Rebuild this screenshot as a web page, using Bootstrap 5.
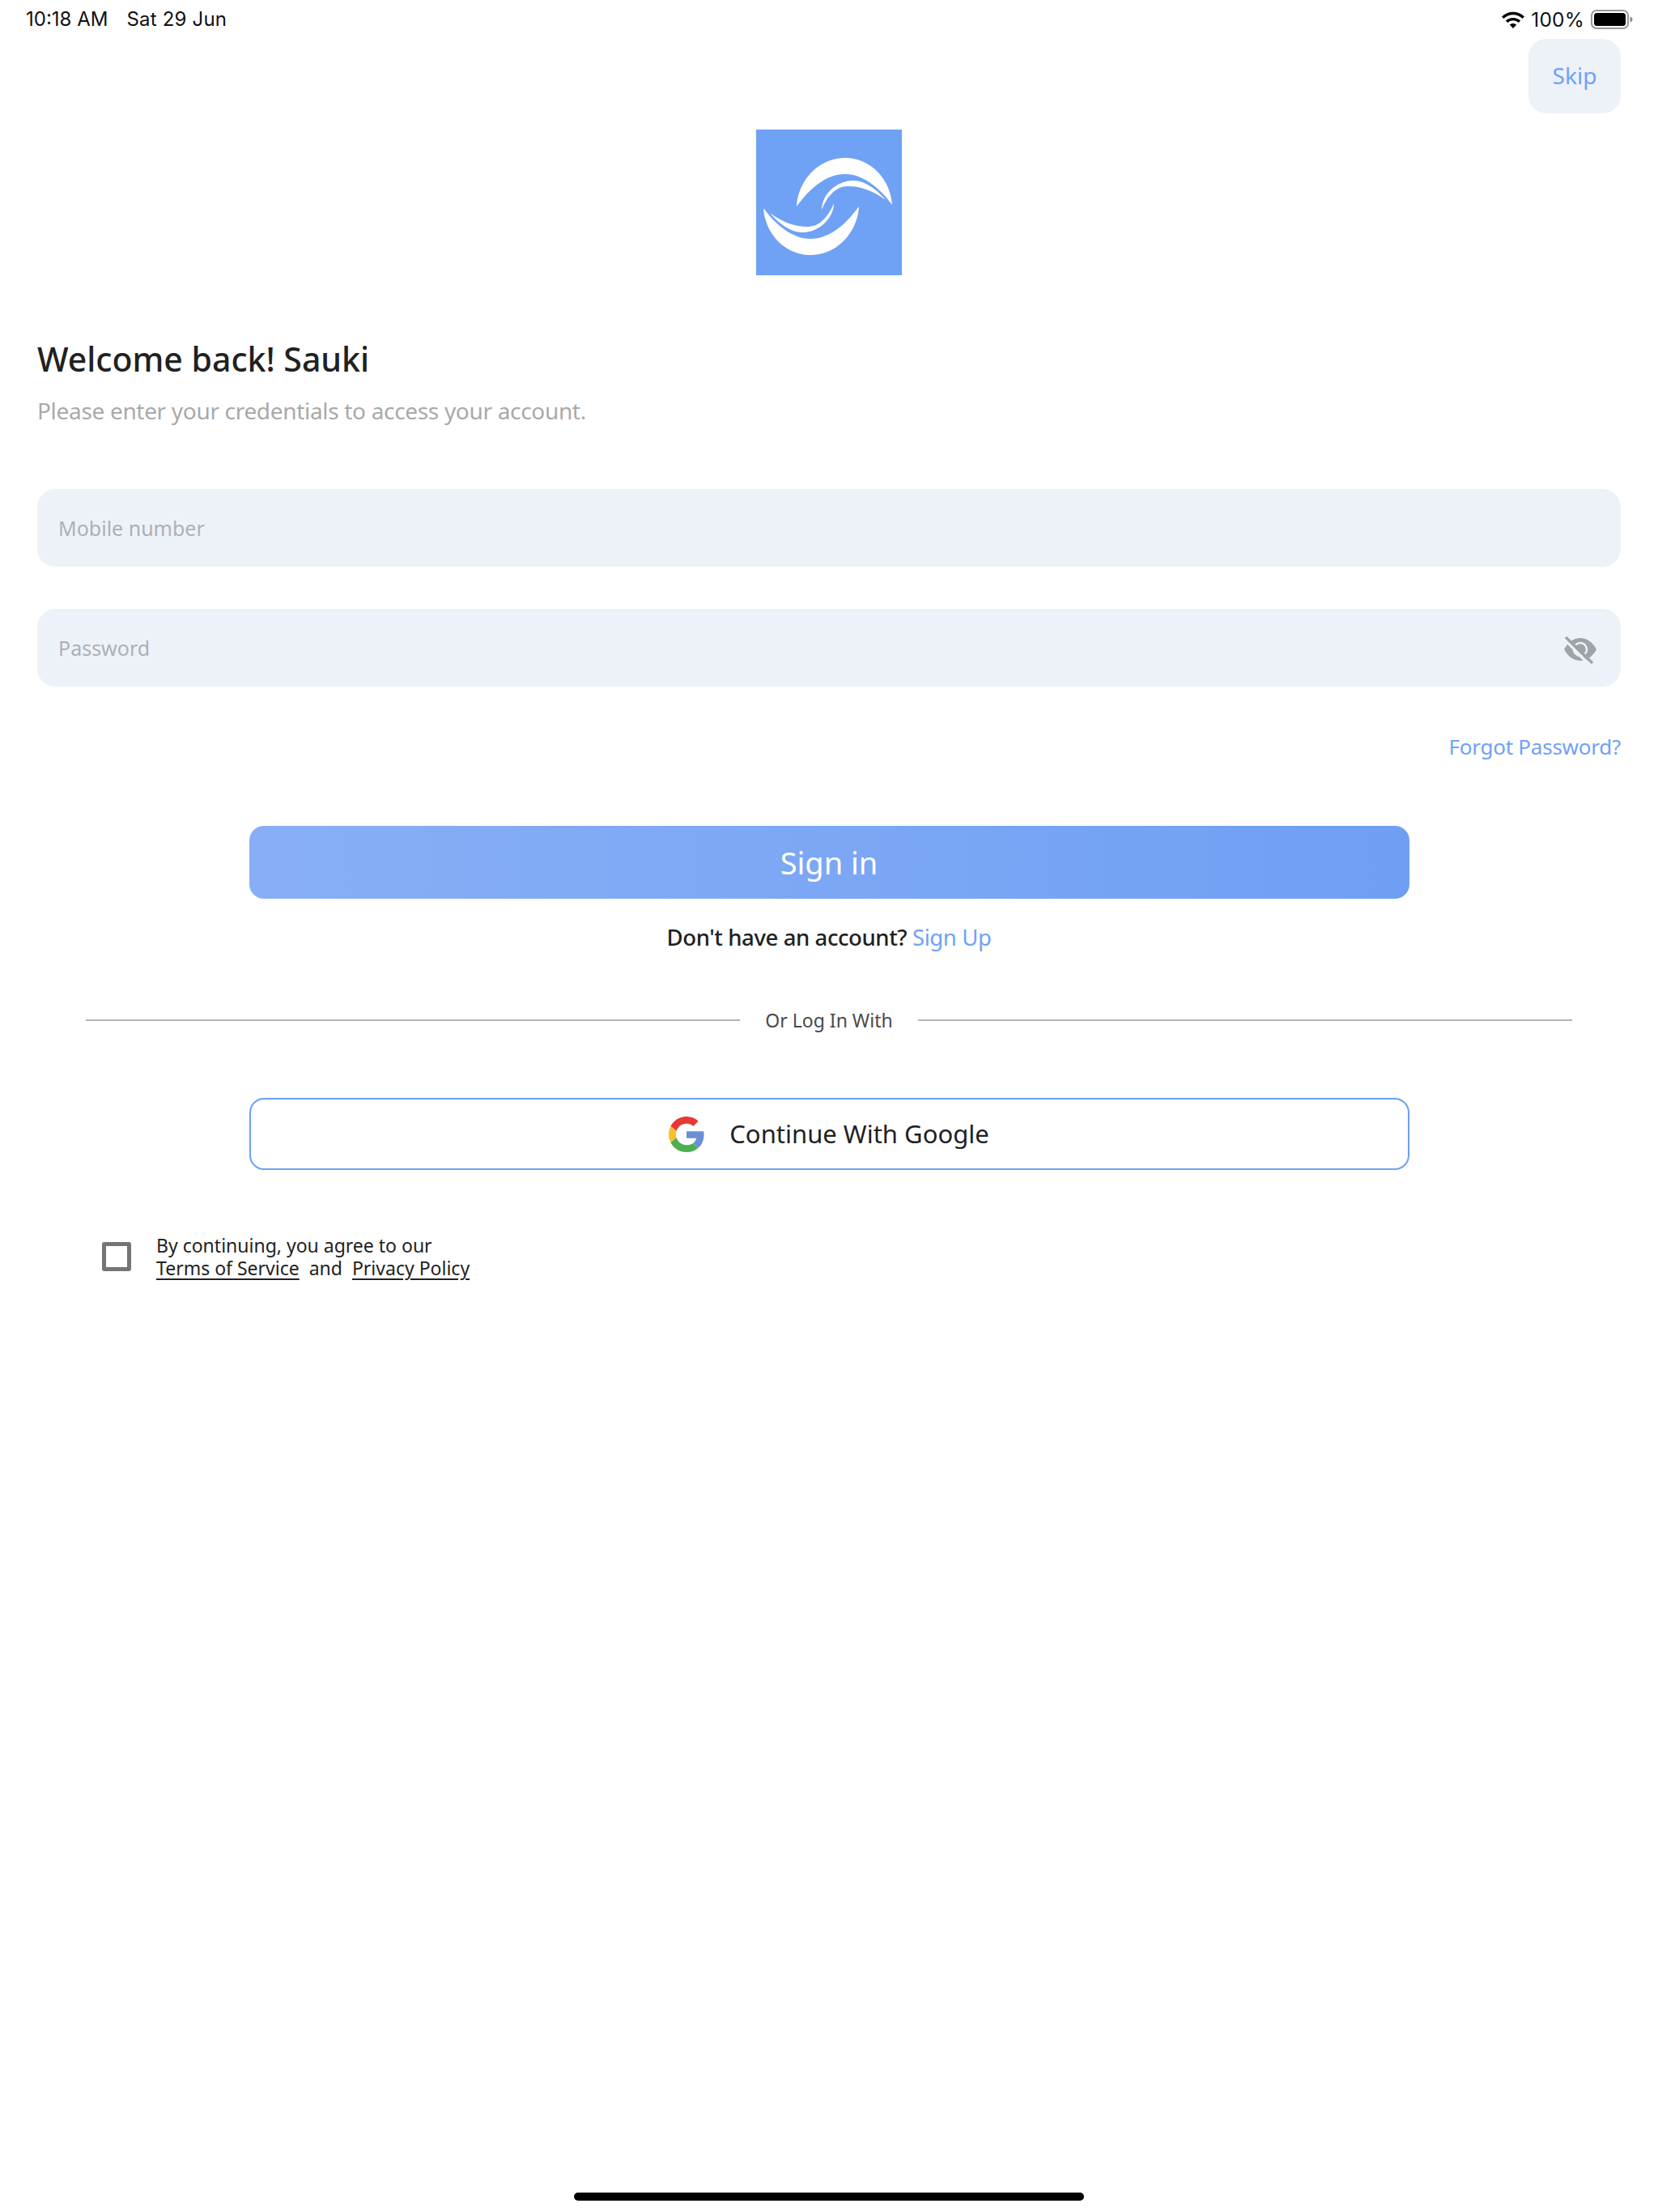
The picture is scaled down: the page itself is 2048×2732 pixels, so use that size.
<!DOCTYPE html>
<html lang="en">
<head>
<meta charset="utf-8">
<title>Sign in</title>
<link href="https://cdn.jsdelivr.net/npm/bootstrap@5.3.0/dist/css/bootstrap.min.css" rel="stylesheet">
<style>
html,body{background:#fff;}
body{font-family:"Noto Sans","Open Sans",sans-serif;color:#212121;}
.screen{min-height:2732px;width:2048px;}
.statusbar{height:48px;padding:0 31px 0 32px;font-family:"Inter","Liberation Sans",sans-serif;font-size:24px;color:#111;line-height:48px;}
.statusbar .st-date{margin-left:23px;letter-spacing:.2px;}
.st-pct{font-size:24.500px;letter-spacing:.2px;}
.content{padding:0 46px;}
.skip-wrap{height:92px;}
.skip-btn{width:114px;height:92px;background:#edf2f9;border:0;border-radius:22px;color:#6ea2f7;font-size:28px;padding:0 0 2px;}
.logo-wrap{margin-top:20px;}
.logo-img{width:180px;height:180px;display:block;}
.welcome{font-size:41px;font-weight:500;margin:73px 0 0;line-height:60px;color:#212121;}
.sub{font-size:28px;color:#a9a9a9;margin:13px 0 0;line-height:42px;letter-spacing:-.32px;}
.field-wrap{margin-top:76px;}
.field-wrap + .field-wrap{margin-top:52px;}
.field{height:96px;background:#edf2f9;border:0;border-radius:22px;padding:0 26px;font-size:25px;color:#212121;}
.field::placeholder{color:#adb0b5;opacity:1;}
.field:focus{background:#edf2f9;box-shadow:none;}
.eye-btn{right:29px;top:33px;width:42px;height:36px;}
.forgot{color:#6ea2f7;font-size:26px;letter-spacing:-.25px;text-decoration:none;line-height:40px;margin-top:54px;}
.sign-in{width:1433px;height:90px;border:0;border-radius:18px;background:linear-gradient(90deg,#88aff6,#6f9ff3);color:#fff;font-size:38px;margin-top:78px;padding:0;}
.signup-line{font-size:27.500px;font-weight:500;color:#212121;line-height:40px;margin-top:28px;letter-spacing:-.4px;}
.signup-line a{color:#6ea2f7;text-decoration:none;font-weight:400;}
.divider-row{margin:62px 60px 0 60px;height:40px;}
.divider-line{height:2px;background:#b4b4b4;}
.divider-text{font-size:23px;color:#4a4a4a;padding:0 31px;line-height:40px;}
.google-btn{width:1433px;height:89px;background:#fff;border:2px solid #6ea0f4;border-radius:18px;color:#212121;font-size:31px;margin-top:76px;padding:0;}
.google-btn svg{width:44px;height:44px;margin-right:31px;}
.agree{margin:79px 0 0 80px;font-size:23px;line-height:28px;color:#222;}
.check-box{width:36px;height:36px;border:5px solid #757575;border-radius:3px;margin-right:31px;}
.agree a{color:#222;text-underline-offset:4px;}
.agree .amp{margin:0 12px;}
.home-bar{width:630px;height:10px;background:#000;border-radius:5px;margin-bottom:14px;}
</style>
</head>
<body class="m-0">
<div class="screen d-flex flex-column">
  <div class="statusbar d-flex justify-content-between align-items-center">
    <div><span>10:18 AM</span><span class="st-date">Sat 29 Jun</span></div>
    <div class="d-flex align-items-center">
      <svg width="28" height="21" viewBox="0 0 28 21" class="me-2" fill="none" stroke="#000" stroke-width="3.400"><path d="M1.200 7.700C8.500.7 19.500.7 26.800 7.700"/><path d="M6 12.800C10.600 8.500 17.400 8.500 22 12.800"/><path d="M9.800 16.600L14 21l4.200-4.400C15.800 14.500 12.200 14.500 9.800 16.600Z" fill="#000" stroke="none"/></svg>
      <span class="st-pct">100%</span>
      <svg width="52" height="24" viewBox="0 0 52 24" class="ms-2"><rect x="1" y="1" width="45" height="22" rx="6" fill="none" stroke="#9a9a9a" stroke-width="2"/><rect x="4" y="4" width="39" height="16" rx="3.500" fill="#000"/><path d="M48.500 8.500c1.800.5 3 1.900 3 3.500s-1.200 3-3 3.500z" fill="#8a8a8a"/></svg>
    </div>
  </div>
  <div class="content">
    <div class="skip-wrap d-flex justify-content-end"><button type="button" class="btn skip-btn">Skip</button></div>
    <div class="logo-wrap d-flex justify-content-center">
      <svg class="logo-img" viewBox="0 0 180 180" role="img" aria-label="Logo">
        <rect width="180" height="180" fill="#6fa2f5"/>
        <g fill="#fff">
          <path id="big" d="M50 95C52 62 78 35 110 35C142 35 166 62 168 93C152 71 131 55 110 55C86 55 66 73 50 95Z"/>
          <path id="small" d="M81 99C81 80 100 63 120 63C135 63 150 75 160 87C145 76 130 70 113 70C98 70 87 84 81 99Z"/>
          <use href="#big" transform="rotate(180 88.500 95)"/>
          <use href="#small" transform="rotate(180 88.500 95)"/>
        </g>
      </svg>
    </div>
    <h1 class="welcome">Welcome back! Sauki</h1>
    <p class="sub">Please enter your credentials to access your account.</p>
    <div class="field-wrap"><input class="form-control field" type="text" placeholder="Mobile number"></div>
    <div class="field-wrap position-relative">
      <input class="form-control field" type="password" placeholder="Password">
      <div class="eye-btn position-absolute">
        <svg width="42" height="36" viewBox="0 0 42 36">
          <path d="M1 17C6 8 13 3 21 3s15 5 20 14c-5 9-12 14-20 14S6 26 1 17Z" fill="#9fa3a8"/>
          <circle cx="21" cy="17" r="8" fill="none" stroke="#edf2f9" stroke-width="2.500"/>
          <path d="M1 4l32 33" stroke="#edf2f9" stroke-width="3.500"/>
          <path d="M3 2l33 32" stroke="#9fa3a8" stroke-width="3.500"/>
        </svg>
      </div>
    </div>
    <div class="d-flex justify-content-end"><a href="#" class="forgot">Forgot Password?</a></div>
    <div class="d-flex justify-content-center"><button type="button" class="btn sign-in">Sign in</button></div>
    <div class="signup-line text-center">Don't have an account? <a href="#">Sign Up</a></div>
    <div class="divider-row d-flex align-items-center">
      <div class="divider-line flex-grow-1"></div>
      <div class="divider-text">Or Log In With</div>
      <div class="divider-line flex-grow-1"></div>
    </div>
    <div class="d-flex justify-content-center">
      <button type="button" class="btn google-btn d-flex align-items-center justify-content-center">
        <svg viewBox="0 0 48 48" aria-hidden="true">
          <path fill="#e53935" d="M24 9.500c3.500 0 6.700 1.300 9.100 3.500l6.800-6.800C35.800 2.400 30.300 0 24 0 14.600 0 6.500 5.400 2.600 13.200l7.900 6.100C12.400 13.600 17.700 9.500 24 9.500z"/>
          <path fill="#6b8fd4" d="M47.500 24.500c0-1.600-.1-3.100-.4-4.500H24v9.100h13.200c-.6 3-2.300 5.500-4.800 7.200l7.700 6c4.500-4.200 7.400-10.300 7.400-17.800z"/>
          <path fill="#fbc02d" d="M10.500 28.700c-.5-1.500-.8-3-.8-4.700s.3-3.200.8-4.700l-7.900-6.100C.9 16.500 0 20.100 0 24s.9 7.500 2.600 10.800l7.900-6.100z"/>
          <path fill="#4caf50" d="M24 48c6.500 0 11.900-2.100 15.900-5.800l-7.700-6c-2.200 1.500-4.900 2.300-8.200 2.300-6.300 0-11.600-4.100-13.500-9.800l-7.900 6.100C6.500 42.600 14.600 48 24 48z"/>
        </svg>
        <span>Continue With Google</span>
      </button>
    </div>
    <div class="agree d-flex align-items-center">
      <div class="check-box flex-shrink-0"></div>
      <div>By continuing, you agree to our<br><a href="#">Terms of Service</a><span class="amp">and</span><a href="#">Privacy Policy</a></div>
    </div>
  </div>
  <div class="mt-auto d-flex justify-content-center"><div class="home-bar"></div></div>
</div>
<script src="https://cdn.jsdelivr.net/npm/bootstrap@5.3.0/dist/js/bootstrap.bundle.min.js"></script>
</body>
</html>
